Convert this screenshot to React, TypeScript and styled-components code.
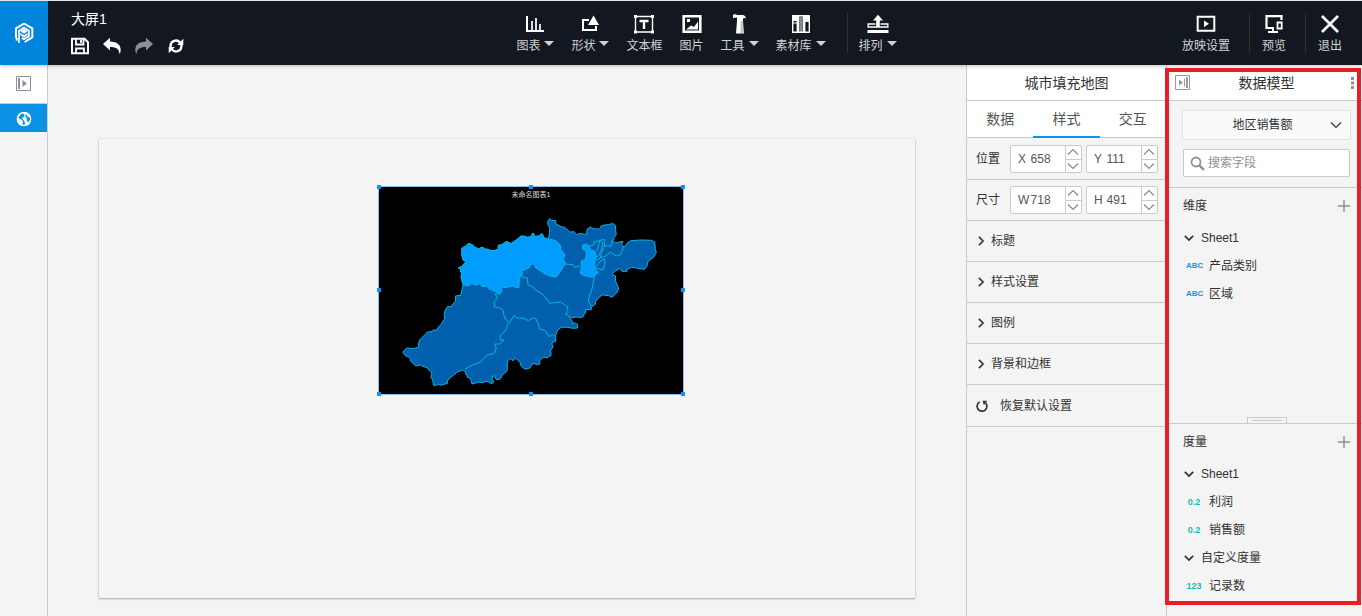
import React, { useState } from 'react';
import type { ReactNode } from 'react';
import styled, { createGlobalStyle } from 'styled-components';

const line = '#cbcbcb';
const accent = '#0a96f0';

const GlobalStyle = createGlobalStyle`
  *, *::before, *::after { box-sizing: border-box; }
  body {
    margin: 0;
    background: #f4f4f4;
    color: #333;
    font-family: "Liberation Sans", "Noto Sans CJK SC", sans-serif;
    font-size: 12px;
    line-height: 16px;
  }
  button, input, select { font: inherit; color: inherit; margin: 0; }
  button { border: 0; padding: 0; background: none; cursor: pointer; }
  h1, h2, h3, ul, p { margin: 0; padding: 0; font-size: inherit; font-weight: normal; list-style: none; }
  svg { display: block; flex: none; }
`;

const Page = styled.div`
  display: flex;
  flex-direction: column;
  min-height: 100vh;
`;

/* ---------- header ---------- */

const Header = styled.header`
  position: relative;
  z-index: 2;
  display: flex;
  height: 65px;
  border-top: 1px solid #dde4e6;
  background: #131820;
  color: #fff;
  box-shadow: 0 1px 4px rgba(0, 0, 0, 0.25);
`;

const LogoLink = styled.a`
  display: flex;
  align-items: center;
  justify-content: center;
  width: 48px;
  background: #0084dc;
`;

const FileArea = styled.div`
  flex: 1;
  padding: 8px 0 0 23px;
`;

const FileName = styled.h1`
  font-size: 14px;
  line-height: 20px;
`;

const FileActions = styled.div`
  display: flex;
  gap: 14px;
  margin-top: 8px;
`;

const IconButton = styled.button`
  display: flex;
  align-items: center;
  justify-content: center;
  width: 18px;
  height: 18px;
  color: #fff;
  &:disabled { color: #8f8f8f; }
`;

const Toolbar = styled.nav`
  display: flex;
  gap: 17px;
`;

const SideTools = styled.div`
  flex: 1;
  display: flex;
  justify-content: flex-end;
  gap: 12px;
  padding-right: 20px;
`;

const ToolButton = styled.button`
  display: flex;
  flex-direction: column;
  align-items: center;
  gap: 4px;
  padding-top: 13px;
  color: #fff;
`;

const ToolLabel = styled.span`
  display: flex;
  gap: 4px;
  color: #d0d1d2;
  white-space: nowrap;
`;

const Caret = styled.span`
  align-self: flex-start;
  margin-top: 3px;
  border: 5px solid transparent;
  border-top: 5px solid #d0d1d2;
  border-bottom: 0;
`;

const Divider = styled.span<{ $before?: number; $after?: number }>`
  width: 1px;
  height: 40px;
  margin: 12px ${p => -(p.$after ?? 0)}px 0 ${p => p.$before ?? 0}px;
  background: #2c3138;
`;

/* ---------- body ---------- */

const Body = styled.div`
  flex: 1;
  display: flex;
`;

const Rail = styled.aside`
  width: 48px;
  border-right: 1px solid ${line};
`;

const RailButton = styled.button<{ $active?: boolean }>`
  display: flex;
  align-items: center;
  justify-content: center;
  width: 100%;
  height: ${p => (p.$active ? 28 : 39)}px;
  padding: ${p => (p.$active ? '2px 0 0' : '0 0 2px')};
  border-bottom: ${p => (p.$active ? 0 : 1)}px solid ${line};
  background: ${p => (p.$active ? '#0b92e4' : '#fff')};
  color: ${p => (p.$active ? '#fff' : '#8b9099')};
`;

const Stage = styled.main`
  flex: 1;
  min-width: 0;
  padding: 74px 51px 17px;
`;

const Board = styled.div`
  position: relative;
  aspect-ratio: 16 / 9;
  background: #f5f5f5;
  box-shadow: 0 0 2px rgba(0, 0, 0, 0.1), 0 1px 2px rgba(0, 0, 0, 0.28);
`;

const Widget = styled.section`
  position: absolute;
  left: 34.2%;
  top: 10.2%;
  width: 37.5%;
  height: 45.6%;
  border: 1px solid #84bde6;
  background: #000;
`;

const WidgetTitle = styled.h2`
  position: absolute;
  top: 2px;
  left: 0;
  right: 0;
  color: #ddd;
  font-size: 7px;
  line-height: 12px;
  text-align: center;
`;

const MapDrawing = styled.svg`
  width: 100%;
  height: 100%;
`;

const Handle = styled.span<{ $x: 0 | 50 | 100; $y: 0 | 50 | 100 }>`
  position: absolute;
  left: ${p => p.$x}%;
  top: ${p => p.$y}%;
  width: 4px;
  height: 4px;
  margin: -2px;
  background: #0a96ff;
`;

/* ---------- style panel ---------- */

const Panel = styled.aside<{ $width: number }>`
  position: relative;
  display: flex;
  flex-direction: column;
  width: ${p => p.$width}px;
  border-left: 1px solid ${line};
`;

const PanelTitle = styled.div`
  display: flex;
  align-items: center;
  height: 36px;
  padding: 0 8px;
  border-bottom: 1px solid ${line};
  background: #fff;
  & h2 {
    flex: 1;
    font-size: 14px;
    line-height: 20px;
    text-align: center;
  }
`;

const ToggleButton = styled.button`
  color: #999;
`;

const MoreButton = styled.button`
  display: flex;
  justify-content: flex-end;
  width: 11px;
`;

const Tabs = styled.div`
  display: flex;
  height: 37px;
  border-bottom: 1px solid ${line};
  background: #fff;
`;

const Tab = styled.button<{ $active: boolean }>`
  flex: 1;
  height: 37px;
  border-bottom: 2px solid ${p => (p.$active ? accent : 'transparent')};
  font-size: 14px;
  line-height: 20px;
  color: #555;
`;

const Settings = styled.div`
  display: flex;
  flex-direction: column;
  padding-top: 1px;
`;

const FieldRow = styled.div`
  display: flex;
  align-items: center;
  gap: 4px;
  padding: 6px 8px 6px 9px;
  border-bottom: 1px solid ${line};
`;

const RowName = styled.span`
  flex: 1;
`;

const Spinner = styled.div`
  display: flex;
  width: 72px;
  height: 28px;
  border: 1px solid ${line};
  border-radius: 2px;
  background: #fff;
  line-height: 26px;
  color: #555;
  & label {
    width: 20px;
    padding-left: 7px;
  }
  & input {
    width: 34px;
    height: 26px;
    padding: 0;
    border: 0;
    background: none;
    outline: none;
  }
`;

const Steps = styled.div`
  display: flex;
  flex-direction: column;
  width: 17px;
  margin-left: auto;
  border-left: 1px solid ${line};
  color: #8a8a8a;
  & button {
    flex: 1;
    display: flex;
    align-items: center;
    justify-content: center;
  }
  & button + button { border-top: 1px solid ${line}; }
`;

const SectionButton = styled.button<{ $wide?: boolean }>`
  display: flex;
  align-items: center;
  gap: ${p => (p.$wide ? 12 : 5)}px;
  height: ${p => (p.$wide ? 42 : 41)}px;
  padding: 0 9px;
  border-bottom: 1px solid ${line};
  text-align: left;
`;

/* ---------- data panel ---------- */

const Sources = styled.div`
  display: flex;
  flex-direction: column;
  gap: 9px;
  padding: 9px 11px 10px 15px;
  border-bottom: 1px solid ${line};
`;

const SelectBox = styled.div`
  position: relative;
  & select {
    width: 100%;
    height: 30px;
    padding: 0 23px 0 15px;
    appearance: none;
    border: 1px solid #dfe2e6;
    border-radius: 2px;
    background: #f9fafc;
    text-align-last: center;
    outline: none;
  }
  & svg {
    position: absolute;
    right: 9px;
    top: 9px;
    pointer-events: none;
  }
`;

const SearchBox = styled.label`
  display: flex;
  align-items: center;
  gap: 3px;
  height: 28px;
  margin: 0 1px;
  padding: 0 6px;
  border: 1px solid ${line};
  border-radius: 1px;
  background: #fff;
  color: #8f8f8f;
  & input {
    flex: 1;
    min-width: 0;
    padding: 0;
    border: 0;
    outline: none;
    background: none;
  }
  & input::placeholder { color: #8f8f8f; opacity: 1; }
`;

const FieldGroup = styled.section<{ $size?: number }>`
  position: relative;
  flex: ${p => (p.$size ? `0 0 ${p.$size}px` : '1')};
`;

const GroupHead = styled.div`
  display: flex;
  align-items: center;
  justify-content: space-between;
  height: 36px;
  padding: 0 12px 0 16px;
`;

const TreeRow = styled.li<{ $leaf?: boolean }>`
  display: flex;
  align-items: center;
  gap: 7px;
  height: 28px;
  padding-left: ${p => (p.$leaf ? 19 : 17)}px;
`;

const TypeTag = styled.span<{ $tone: string }>`
  width: 16px;
  color: ${p => p.$tone};
  font-size: 9px;
  font-weight: bold;
  text-align: center;
  white-space: nowrap;
`;

const AbcTag = styled(TypeTag)`
  font-family: "Liberation Sans Narrow", "Liberation Sans", sans-serif;
  font-size: 8px;
`;

const Splitter = styled.div`
  position: relative;
  border-top: 1px solid ${line};
`;

const Grip = styled.span`
  position: absolute;
  left: 80px;
  bottom: 0;
  width: 40px;
  height: 7px;
  padding: 2px 4px;
  border: 1px solid ${line};
  &::before {
    content: "";
    display: block;
    height: 1px;
    background: ${line};
  }
`;

const Highlight = styled.div`
  position: absolute;
  top: 3px;
  left: -2px;
  right: 1px;
  bottom: 11px;
  border: 4px solid #ed1c24;
  pointer-events: none;
`;

/* ---------- icons ---------- */

type IconProps = { w?: number; h?: number; box?: string; children: ReactNode };

const Svg = ({ w = 20, h = 20, box, children }: IconProps) => (
  <svg width={w} height={h} viewBox={box ?? `0 0 ${w} ${h}`} fill="none" aria-hidden="true">
    {children}
  </svg>
);

const Logo = () => (
  <Svg w={20} h={22} box="0 0 60 66">
    <g stroke="#fff" strokeWidth="6" strokeLinejoin="round">
      <path d="M6 48V19L30 5l25 14v27L32 60" />
      <path d="M15 63V26l15-9 15 9v17L30 52l-7-4" strokeWidth="5" />
      <path d="M8 48v8" />
    </g>
    <path d="M30 21l11 7-11 7-11-7zM19 33l11 7 11-7v6l-11 8-11-8z" fill="#fff" />
  </Svg>
);

const SaveIcon = () => (
  <Svg w={18} h={18}>
    <path d="M1 1.800h12.500l3.500 3.400V16.200H1z" stroke="currentColor" strokeWidth="2" />
    <path d="M5 2v5.500h7.500V2M10 3v3M5 16v-4.500h8V16" stroke="currentColor" strokeWidth="1.800" />
  </Svg>
);

const arrowBack = 'M7 .8v3.700c7 0 10.700 3.500 10.700 8.500 0 1.600-.4 3-1.200 4.200-.2-5-2.800-7.200-9.500-7.200v3.500L0 7z';

const UndoIcon = () => (
  <Svg w={18} h={18}>
    <path d={arrowBack} fill="currentColor" />
  </Svg>
);

const RedoIcon = () => (
  <Svg w={18} h={18}>
    <path d={arrowBack} fill="currentColor" transform="matrix(-1 0 0 1 18 0)" />
  </Svg>
);

const RefreshIcon = () => (
  <Svg w={18} h={18}>
    <path d="M3.600 11V8.500A5.300 5.300 0 0 1 13 5.500M14.400 7.500V9.500A5.300 5.300 0 0 1 5 12.500" stroke="currentColor" strokeWidth="2.400" />
    <path d="M9 1.800H4L1.800 4v6h3.400V5.500zM16.200 2v6h-6zM1.800 16v-6h6z" fill="currentColor" fillOpacity="0" />
    <path d="M16.300 1.800v6.200h-6.200zM1.700 16.200V10h6.200z" fill="currentColor" />
  </Svg>
);

const ChartIcon = () => (
  <Svg>
    <path d="M2 2v15h17" stroke="currentColor" strokeWidth="2" />
    <path d="M7 7v9M11 4v12M15 10v6" stroke="currentColor" strokeWidth="2" strokeOpacity=".85" />
  </Svg>
);

const ShapeIcon = () => (
  <Svg>
    <path d="M9 6H3v10h13v-4" stroke="currentColor" strokeWidth="2" />
    <path d="M13.500 1.500L19 11H8z" fill="currentColor" />
  </Svg>
);

const TextIcon = () => (
  <Svg w={22}>
    <path d="M2.500 2.500h17v15.500h-17z" stroke="currentColor" strokeWidth="1.400" />
    <path d="M1 1h3v3H1zM18 1h3v3h-3zM1 16.500h3v3H1zM18 16.500h3v3h-3z" fill="currentColor" />
    <path d="M6.500 7h9M11 7v8" stroke="currentColor" strokeWidth="2.400" />
  </Svg>
);

const PictureIcon = () => (
  <Svg>
    <path d="M1.700 2.200h16.600v15.600H1.700z" stroke="currentColor" strokeWidth="2.600" />
    <path d="M4 15.500l5-4 3 1.500 4-5.500v8z" fill="currentColor" />
    <path d="M5 5h3v3H5z" fill="currentColor" />
  </Svg>
);

const HammerIcon = () => (
  <Svg>
    <path d="M3 .5l3-.3 1 .8h5.500c2 0 3 1.200 3.500 3.500-1-.8-2-.8-3 0V5H7V3.500L3 4z" fill="currentColor" />
    <path d="M7 5h6v2l1 12.500H6L7 7z" fill="currentColor" />
    <path d="M12 7v12" stroke="#131820" strokeOpacity=".25" strokeWidth="3" />
  </Svg>
);

const LibraryIcon = () => (
  <Svg>
    <path d="M1.700 1.700h4.600v16.600H1.700zM7.700 1.700h4.600v16.600H7.700zM13.700 1.700h4.600v16.600h-4.600z" stroke="currentColor" strokeWidth="1.400" />
    <path d="M1.500 1.500h5V7h-5zM13.500 1.500h5V8h-5z" fill="currentColor" />
    <path d="M10 3v15" stroke="currentColor" strokeOpacity=".5" strokeWidth="2" />
    <path d="M2 9h4" stroke="currentColor" strokeWidth="1" />
  </Svg>
);

const ArrangeIcon = () => (
  <Svg w={22}>
    <path d="M.5 16h21v3H.500z" fill="currentColor" />
    <path d="M8.500 10H1.200v3h19.600v-3h-7.300" stroke="currentColor" strokeWidth="1.400" />
    <path d="M11 .8l5 5.700h-3.200V13H9.200V6.500H6z" fill="currentColor" />
  </Svg>
);

const PlayIcon = () => (
  <Svg>
    <path d="M1.700 2.700h16.600v14H1.700z" stroke="currentColor" strokeWidth="2" />
    <path d="M8 6.500V13l5-3.200z" fill="currentColor" />
  </Svg>
);

const PreviewIcon = () => (
  <Svg>
    <path d="M17.500 6V2.200h-15V14H10" stroke="currentColor" strokeWidth="2.200" />
    <path d="M9 14v4M4 18h10" stroke="currentColor" strokeWidth="2" />
    <path d="M13.500 8.500h4.200v6h-4.200z" stroke="currentColor" strokeWidth="1.800" />
  </Svg>
);

const CloseIcon = () => (
  <Svg>
    <path d="M2 2l16 16M18 2L2 18" stroke="currentColor" strokeWidth="2.600" />
  </Svg>
);

const ExpandIcon = ({ flip = false }: { flip?: boolean }) => (
  <Svg w={15} h={15}>
    <g stroke="currentColor">
      <path d="M.5.5h14v14H.5z" />
      <path d={flip ? 'M12 2v11' : 'M3 2v11'} strokeWidth="2" />
      {flip && <path d="M9.500 3.500v8" />}
    </g>
    <path d={flip ? 'M4 4.500v6l4-3z' : 'M6.500 4v7l4.500-3.500z'} fill="currentColor" />
  </Svg>
);

const GlobeIcon = () => (
  <Svg w={16} h={16}>
    <circle cx="8" cy="8" r="7.300" fill="#fff" />
    <path d="M6.500 2.200L4.300 4 2.500 6.500l1 1.500 2 .5 1.500 2-.5 3 2 .8.500-3L7.500 9 6 7.200l2-1.500.7-2zM10 3l-.8 3 1.800 1-.5 2 1.500 2.500 2-2.500V6.500L12 6z" fill="#0b92e4" />
  </Svg>
);

const Chevron = ({ dir, size = 8, weight = 1.6 }: { dir: 'up' | 'down' | 'right'; size?: number; weight?: number }) => {
  const d = { up: 'M1 8.500L6 3.500l5 5', down: 'M1 3.500l5 5 5-5', right: 'M3.500 1l5 5-5 5' }[dir];
  return (
    <Svg w={size} h={size} box="0 0 12 12">
      <path d={d} stroke="currentColor" strokeWidth={(weight * 12) / size} />
    </Svg>
  );
};

const ResetIcon = () => (
  <Svg w={12} h={12}>
    <path d="M3.800 1.900A4.900 4.900 0 1 0 9.500 2.800" stroke="currentColor" strokeWidth="1.700" />
    <path d="M6.500.7h4.700L7.800 5z" fill="currentColor" />
  </Svg>
);

const SearchIcon = () => (
  <Svg w={15} h={15}>
    <circle cx="6" cy="6" r="4.500" stroke="currentColor" strokeWidth="1.800" />
    <path d="M9.300 9.300l4.700 4.700" stroke="currentColor" strokeWidth="2.400" />
  </Svg>
);

const PlusIcon = () => (
  <Svg w={12} h={12}>
    <path d="M6 0v12M0 6h12" stroke="#8f8f8f" strokeWidth="1.400" />
  </Svg>
);

const DotsIcon = () => (
  <Svg w={3} h={12}>
    <path d="M0 0h3v3H0zM0 4.500h3v3H0zM0 9h3v3H0z" fill="#8f8f8f" />
  </Svg>
);

/* ---------- map ---------- */

const outline =
  'M280 312L274 290l2-12-4-8 1-5-7-3 4-2 8-4 4-6 8-6-10-6-1-6-3-10 1-6-1-12 5-4 9-4 3-5 5-4 3 3 9 4 4 5 6 3 10 3 3-4 7-1 5 5 9 1 10 4 10 0 12-4v-12l7-1 7-3 7-5 5-3 6 5 8 1 7-5 7-5 7-5 7-7 10 1 10 3 11-2 4-10 3 1 5 9 8-2 6 0 4-6 4 0 4 12 12 2 4-7 1-12 1-13-6-12 0-8 6-8 6 5 12 1v10l7 3 9 5 8 1 8 5 10 10 7 0 5-2 8 9 6-1 6-2 18 4 2-10 0-6 10-7 8 5 8 0 10 2 5-5 1-5 10-3 12-1 6-2 10-1 6 7 0 10 2 16-6 8-4 10 6 6 6 0 8-2 10-2-4 10 8 8 10-14 10-6 32-2 30 1 10 5 2 23 3 9-11 16-14 10-4 16-8 9-9-3-9 0-8-3-12-1-7 4-7 2 0 7-7-1-7 0-3-6-5-2-10 5-12 9 2 4 8 4 0 16 6 12 3 8-1 6-4 8-7 6-7 8-12-6-7 1-9-3-8 5-6 7-8 8 0 8-7 5-5 3-2 10-9-2-7 2 0 9-4 1-2 8-4 4-10 0-10-1-12 3-8-6 4 8 6 8 0 7 10-2 6 5 0 10-10 1-12-1-8-2-20 0-10 8-3 8-3 8 0 18-9 2-3 6 4 8-8 12 2 8-1 8-5 1-6 5-8-2-6 2-8 8 0 10-10 2-7-4-7 4-6 10-10 3-8-1-4-5-6-5-1-8-5-6-10-8-6 8-5-4-7-2-6 10 0 26-8 8-8 6-4 10-7 3-7-1-4-10-6 0-2 14 6 2-6 8-10-6-8-2-8 4-12-2-22 6-2-8-4-10-8-2-2-8-4-2 2-6-10-6-16 6-20 16-10 10 0 8-20 6-7-3-7 3-8 0-2-16-6-8 3-7-1-7-12-14-16-6-6-4-8 4-8-2-12-12-1-8-5-4-9-4-9-10 3-6 9-8 18 2 18-4-1-10 3-12 9-8 7-8 8-8 14-1 2-4 12-1 6-10 6-6 12-18-2-10 2-12 8-14 12 0 5-9 7-7 0-16 16-2z';

const brightRegion =
  'M280 312L274 290l2-12-4-8 1-5-7-3 4-2 8-4 4-6 8-6-10-6-1-6-3-10 1-6-1-12 5-4 9-4 3-5 5-4 3 3 9 4 4 5 6 3 10 3 3-4 7-1 5 5 9 1 10 4 10 0 12-4v-12l7-1 7-3 7-5 5-3 6 5 8 1 7-5 7-5 7-5 7-7 10 1 10 3 11-2 4-10 3 1 5 9 8-2 6 0 4-6 4 0 4 12 12 2L559 180 573 194 573 206 587 222 581 236 589 250 581 258 573 272 561 289 541 286 527 280 513 270 499 262 493 250 485 250 478 262 458 270 458 284 450 288 448 322 438 320 428 316 418 318 410 322 396 318 396 334 390 340 376 332 360 326 350 316 340 318 328 310 318 314 306 308 296 316z';

const smallBright =
  'M639 194L651 190 659 196 665 208 677 212 681 230 677 240 675 262 687 276 677 284 669 290 645 285 633 278 637 256 635 242 649 236 651 220 649 208 641 206z';

const borders = [
  'M390 340L376 340 384 352 374 362 374 378 390 382 402 390 402 402 410 418 420 426',
  'M286 566L310 552 330 546 352 524 374 518 380 504 376 490 390 490 404 478 392 478 392 464 408 450 414 432 420 426 434 404 442 412 460 412 477 420 491 411 499 414 509 436 509 444 527 450 539 468 549 462 557 466',
  'M452 288L474 292 475 312 489 318 497 328 513 336 527 348 541 368 573 364 585 372 595 378 595 390 589 400 597 404',
  'M589 250L611 252 615 260 633 256',
  'M675 285L673 300 669 322 661 344 657 360 665 376',
  'M661 196L675 192 673 184 691 180 705 176 705 196 727 196 729 178',
  'M691 180L687 200 681 212M697 182L701 190 695 210 689 224 681 230',
  'M705 196L697 216 693 232 681 240M693 232L705 228 723 215 741 226 755 222 763 198',
  'M705 234L707 250 701 268 677 262 691 244z',
];

const CityMap = () => (
  <MapDrawing viewBox="27 19 915 622" preserveAspectRatio="none" role="img" aria-label="城市填充地图">
    <g stroke="#0bb4e0" strokeWidth="3" strokeLinejoin="round">
      <path d={outline} fill="#0060ad" />
      <path d={brightRegion} fill="#009cff" />
      <path d={smallBright} fill="#009cff" />
      {borders.map(d => (
        <path key={d} d={d} fill="none" />
      ))}
    </g>
  </MapDrawing>
);

/* ---------- parts ---------- */

const Tool = ({ icon, label, menu }: { icon: ReactNode; label: string; menu?: boolean }) => (
  <ToolButton type="button">
    {icon}
    <ToolLabel>
      {label}
      {menu && <Caret />}
    </ToolLabel>
  </ToolButton>
);

const NumberField = ({ name, start }: { name: string; start: number }) => {
  const [value, setValue] = useState(start);
  const id = `field-${name}`;
  return (
    <Spinner>
      <label htmlFor={id}>{name}</label>
      <input id={id} inputMode="numeric" value={value} onChange={e => setValue(Number(e.target.value) || 0)} />
      <Steps>
        <button type="button" aria-label={`${name} +`} onClick={() => setValue(value + 1)}>
          <Chevron dir="up" size={12} weight={1.2} />
        </button>
        <button type="button" aria-label={`${name} -`} onClick={() => setValue(value - 1)}>
          <Chevron dir="down" size={12} weight={1.2} />
        </button>
      </Steps>
    </Spinner>
  );
};

const Branch = ({ children }: { children: ReactNode }) => (
  <TreeRow>
    <Chevron dir="down" size={10} weight={1.8} />
    {children}
  </TreeRow>
);

const handles: Array<[0 | 50 | 100, 0 | 50 | 100]> = [
  [0, 0], [50, 0], [100, 0], [0, 50], [100, 50], [0, 100], [50, 100], [100, 100],
];

const tabNames = ['数据', '样式', '交互'];
const sectionNames = ['标题', '样式设置', '图例', '背景和边框'];
const teal = '#12bfa6';
const blue = '#1296e8';

export default function App() {
  const [tab, setTab] = useState('样式');
  return (
    <Page>
      <GlobalStyle />
      <Header>
        <LogoLink href="#" aria-label="首页"><Logo /></LogoLink>
        <FileArea>
          <FileName>大屏1</FileName>
          <FileActions>
            <IconButton type="button" aria-label="保存"><SaveIcon /></IconButton>
            <IconButton type="button" aria-label="撤销"><UndoIcon /></IconButton>
            <IconButton type="button" aria-label="重做" disabled><RedoIcon /></IconButton>
            <IconButton type="button" aria-label="刷新"><RefreshIcon /></IconButton>
          </FileActions>
        </FileArea>
        <Toolbar>
          <Tool icon={<ChartIcon />} label="图表" menu />
          <Tool icon={<ShapeIcon />} label="形状" menu />
          <Tool icon={<TextIcon />} label="文本框" />
          <Tool icon={<PictureIcon />} label="图片" />
          <Tool icon={<HammerIcon />} label="工具" menu />
          <Tool icon={<LibraryIcon />} label="素材库" menu />
          <Divider $before={4} $after={6} />
          <Tool icon={<ArrangeIcon />} label="排列" menu />
        </Toolbar>
        <SideTools>
          <Tool icon={<PlayIcon />} label="放映设置" />
          <Divider $before={7} />
          <Tool icon={<PreviewIcon />} label="预览" />
          <Divider $before={7} />
          <Tool icon={<CloseIcon />} label="退出" />
        </SideTools>
      </Header>
      <Body>
        <Rail>
          <RailButton type="button" aria-label="展开"><ExpandIcon /></RailButton>
          <RailButton type="button" aria-label="页面" $active><GlobeIcon /></RailButton>
        </Rail>
        <Stage>
          <Board>
            <Widget>
              <CityMap />
              <WidgetTitle>未命名图表1</WidgetTitle>
              {handles.map(([x, y]) => (
                <Handle key={`${x}-${y}`} $x={x} $y={y} />
              ))}
            </Widget>
          </Board>
        </Stage>
        <Panel $width={200}>
          <PanelTitle><h2>城市填充地图</h2></PanelTitle>
          <Tabs role="tablist">
            {tabNames.map(name => (
              <Tab key={name} type="button" role="tab" aria-selected={tab === name} $active={tab === name} onClick={() => setTab(name)}>
                {name}
              </Tab>
            ))}
          </Tabs>
          <Settings>
            <FieldRow>
              <RowName>位置</RowName>
              <NumberField name="X" start={658} />
              <NumberField name="Y" start={111} />
            </FieldRow>
            <FieldRow>
              <RowName>尺寸</RowName>
              <NumberField name="W" start={718} />
              <NumberField name="H" start={491} />
            </FieldRow>
            {sectionNames.map(name => (
              <SectionButton key={name} type="button">
                <Chevron dir="right" size={10} weight={1.6} />
                {name}
              </SectionButton>
            ))}
            <SectionButton type="button" $wide>
              <ResetIcon />
              恢复默认设置
            </SectionButton>
          </Settings>
        </Panel>
        <Panel $width={196}>
          <PanelTitle>
            <ToggleButton type="button" aria-label="收起"><ExpandIcon flip /></ToggleButton>
            <h2>数据模型</h2>
            <MoreButton type="button" aria-label="更多"><DotsIcon /></MoreButton>
          </PanelTitle>
          <Sources>
            <SelectBox>
              <select aria-label="数据模型" defaultValue="地区销售额">
                <option>地区销售额</option>
              </select>
              <Chevron dir="down" size={12} weight={1.2} />
            </SelectBox>
            <SearchBox>
              <SearchIcon />
              <input type="text" aria-label="搜索字段" placeholder="搜索字段" />
            </SearchBox>
          </Sources>
          <FieldGroup $size={235}>
            <GroupHead>
              <h3>维度</h3>
              <button type="button" aria-label="添加维度"><PlusIcon /></button>
            </GroupHead>
            <ul>
              <Branch>Sheet1</Branch>
              <TreeRow $leaf><AbcTag $tone={blue}>ABC</AbcTag>产品类别</TreeRow>
              <TreeRow $leaf><AbcTag $tone={blue}>ABC</AbcTag>区域</TreeRow>
            </ul>
          </FieldGroup>
          <Splitter><Grip /></Splitter>
          <FieldGroup>
            <GroupHead>
              <h3>度量</h3>
              <button type="button" aria-label="添加度量"><PlusIcon /></button>
            </GroupHead>
            <ul>
              <Branch>Sheet1</Branch>
              <TreeRow $leaf><TypeTag $tone={teal}>0.2</TypeTag>利润</TreeRow>
              <TreeRow $leaf><TypeTag $tone={teal}>0.2</TypeTag>销售额</TreeRow>
              <Branch>自定义度量</Branch>
              <TreeRow $leaf><TypeTag $tone={teal}>123</TypeTag>记录数</TreeRow>
            </ul>
          </FieldGroup>
          <Highlight />
        </Panel>
      </Body>
    </Page>
  );
}
